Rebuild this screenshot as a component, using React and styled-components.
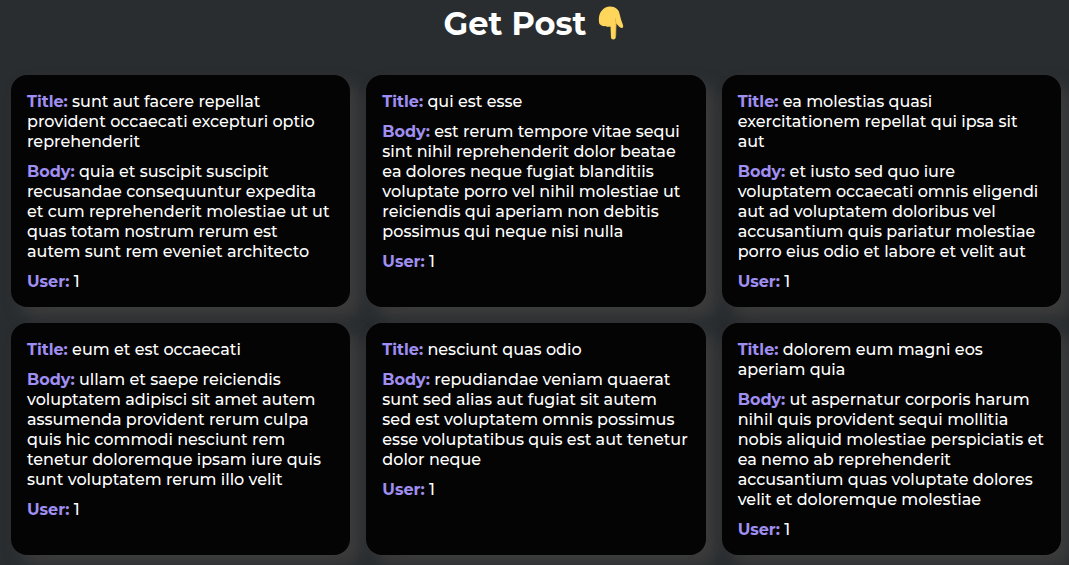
import React from "react";
import styled, { createGlobalStyle } from "styled-components";

const GlobalStyle = createGlobalStyle`
  * {
    margin: 0;
    padding: 0;
    box-sizing: border-box;
  }
  body {
    background-color: #292d30;
    color: #ffffff;
    font-family: Montserrat, Inter, "Open Sans", sans-serif;
    overflow: hidden;
  }
`;
const Container = styled.div`
  height: 565px;
  padding: 3px 8px 0 11px;
`;
const Heading = styled.h1`
  display: flex;
  justify-content: center;
  align-items: center;
  gap: 12px;
  height: 40px;
  margin-bottom: 32px;
  padding-right: 4px;
  font-size: 32px;
  font-weight: 700;
`;
const HandIcon = styled.svg`
  width: 26px;
  height: 34px;
`;
const PostGrid = styled.div`
  display: grid;
  grid-template-columns: repeat(3, 1fr);
  grid-auto-rows: 232px;
  gap: 16px;
`;
const Card = styled.div`
  display: flex;
  flex-direction: column;
  gap: 10px;
  padding: 17px 16px 15px;
  border-radius: 16px;
  background-color: #040404;
  box-shadow: 10px 10px 16px #3d3c3c;
`;
const Text = styled.p`
  font-size: 16px;
  font-weight: 500;
  line-height: 20px;
`;
const Label = styled.span`
  color: #a08ff2;
  font-weight: 700;
`;

const posts = [
  {
    id: 1,
    userId: 1,
    title: "sunt aut facere repellat provident occaecati excepturi optio reprehenderit",
    body: "quia et suscipit suscipit recusandae consequuntur expedita et cum reprehenderit molestiae ut ut quas totam nostrum rerum est autem sunt rem eveniet architecto",
  },
  {
    id: 2,
    userId: 1,
    title: "qui est esse",
    body: "est rerum tempore vitae sequi sint nihil reprehenderit dolor beatae ea dolores neque fugiat blanditiis voluptate porro vel nihil molestiae ut reiciendis qui aperiam non debitis possimus qui neque nisi nulla",
  },
  {
    id: 3,
    userId: 1,
    title: "ea molestias quasi exercitationem repellat qui ipsa sit aut",
    body: "et iusto sed quo iure voluptatem occaecati omnis eligendi aut ad voluptatem doloribus vel accusantium quis pariatur molestiae porro eius odio et labore et velit aut",
  },
  {
    id: 4,
    userId: 1,
    title: "eum et est occaecati",
    body: "ullam et saepe reiciendis voluptatem adipisci sit amet autem assumenda provident rerum culpa quis hic commodi nesciunt rem tenetur doloremque ipsam iure quis sunt voluptatem rerum illo velit",
  },
  {
    id: 5,
    userId: 1,
    title: "nesciunt quas odio",
    body: "repudiandae veniam quaerat sunt sed alias aut fugiat sit autem sed est voluptatem omnis possimus esse voluptatibus quis est aut tenetur dolor neque",
  },
  {
    id: 6,
    userId: 1,
    title: "dolorem eum magni eos aperiam quia",
    body: "ut aspernatur corporis harum nihil quis provident sequi mollitia nobis aliquid molestiae perspiciatis et ea nemo ab reprehenderit accusantium quas voluptate dolores velit et doloremque molestiae",
  },
];

function PostCard({ title, body, userId }) {
  return (
    <Card>
      <Text>
        <Label>Title:</Label> {title}
      </Text>
      <Text>
        <Label>Body:</Label> {body}
      </Text>
      <Text>
        <Label>User:</Label> {userId}
      </Text>
    </Card>
  );
}

function App() {
  return (
    <>
      <GlobalStyle />
      <Container>
        <Heading>
          Get Post
          <HandIcon viewBox="0 0 26 34" aria-hidden="true">
            <path
              d="M1.500 18C0.500 15 0.500 9 3 5.500C6 1.500 9 0.500 12 0.500C15 0.500 18 1.500 20 4C21.500 6 22 10 23 13.500C24 17 25.500 19 25.200 21C24.500 22.500 22 22 21 20.500L18.200 17.500L17.700 31.500C17.500 34 13.200 34 13 31.500L12.500 20.500C10.500 21 9 21 7.500 20C5 20.500 3 19.500 1.500 18Z"
              fill="#ffd65c"
            />
            <path d="M17.300 12.500L18 17.500L17.700 30" fill="none" stroke="#e0a63c" strokeWidth="0.800" />
          </HandIcon>
        </Heading>
        <PostGrid>
          {posts.map((post) => (
            <PostCard key={post.id} {...post} />
          ))}
        </PostGrid>
      </Container>
    </>
  );
}

export default App;
